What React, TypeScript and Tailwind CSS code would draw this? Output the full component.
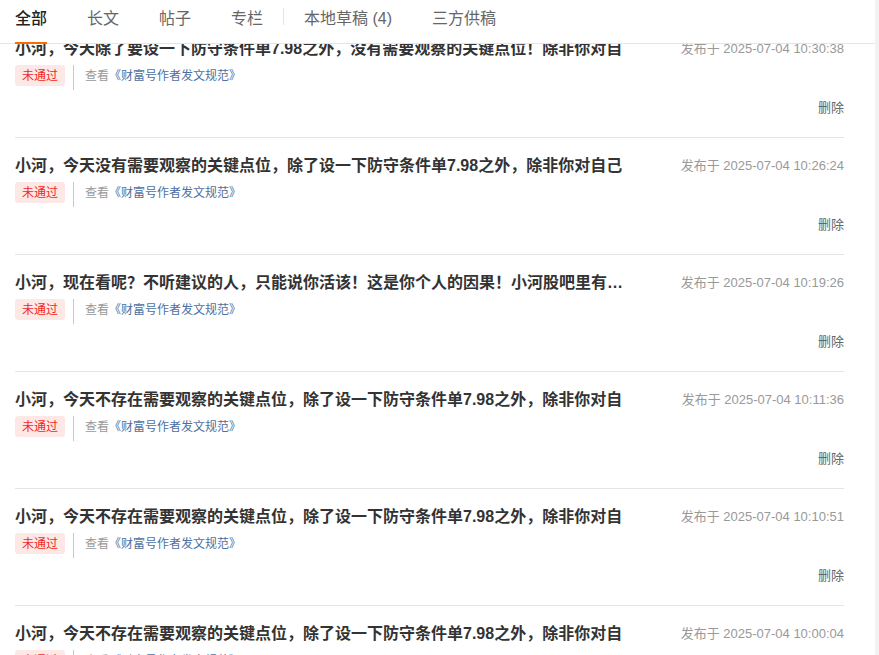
import React from "react";

const tabs = ["全部", "长文", "帖子", "专栏"];
const tabsRight = ["本地草稿 (4)", "三方供稿"];

interface postItem {
  title: string;
  date: string;
}

const posts: postItem[] = [
  {
    title: "小河，今天除了要设一下防守条件单7.98之外，没有需要观察的关键点位！除非你对自",
    date: "2025-07-04 10:30:38",
  },
  {
    title: "小河，今天没有需要观察的关键点位，除了设一下防守条件单7.98之外，除非你对自己",
    date: "2025-07-04 10:26:24",
  },
  {
    title: "小河，现在看呢？不听建议的人，只能说你活该！这是你个人的因果！小河股吧里有…",
    date: "2025-07-04 10:19:26",
  },
  {
    title: "小河，今天不存在需要观察的关键点位，除了设一下防守条件单7.98之外，除非你对自",
    date: "2025-07-04 10:11:36",
  },
  {
    title: "小河，今天不存在需要观察的关键点位，除了设一下防守条件单7.98之外，除非你对自",
    date: "2025-07-04 10:10:51",
  },
  {
    title: "小河，今天不存在需要观察的关键点位，除了设一下防守条件单7.98之外，除非你对自",
    date: "2025-07-04 10:00:04",
  },
];

const PostRow = ({ title, date }: postItem) => {
  return (
    <div className="w-[829px] border-b border-[#e5e5e5] pt-[16px] pb-[19px]">
      <div className="flex h-[24px] items-center justify-between">
        <h3 className="w-[612px] overflow-hidden whitespace-nowrap text-[16px] leading-[24px] font-bold text-[#333]">
          {title}
        </h3>
        <span className="text-[13px] text-[#999]">发布于 {date}</span>
      </div>
      <div className="mt-[4px] flex h-[25px] items-start">
        <span className="flex h-[21px] w-[50px] items-center justify-center rounded-[3px] bg-[#fde8e6] text-[12px] text-[#f2261f]">
          未通过
        </span>
        <div className="ml-[8px] h-[25px] w-px bg-[#c8c8c8]"></div>
        <span className="ml-[11px] flex h-[21px] items-center text-[12px] text-[#999]">
          查看
          <a className="text-[#4d6f9f]">《财富号作者发文规范》</a>
        </span>
      </div>
      <div className="mt-[8px] flex h-[20px] items-center justify-end">
        <span className="text-[13px] text-[#666]">删除</span>
      </div>
    </div>
  );
};

export default function App() {
  return (
    <div
      className="flex h-[655px] w-full overflow-hidden bg-[#f2f2f2]"
      style={{ fontFamily: '"Liberation Sans", "Noto Sans CJK SC", sans-serif' }}
    >
      <main className="relative h-full w-[875px] bg-white">
        <nav className="absolute top-0 right-0 left-0 z-10 flex h-[44px] items-start border-b border-[#e5e5e5] bg-white pl-[15px]">
          {tabs.map((t, i) => (
            <div
              key={t}
              className={`relative h-full pt-[8px] text-[16px] leading-[22px] ${
                i === 0 ? "font-medium text-[#222]" : "ml-[40px] text-[#666]"
              }`}
            >
              {t}
              {i === 0 && (
                <div className="absolute right-0 -bottom-px left-0 h-[2px] bg-[#ff6a00]"></div>
              )}
            </div>
          ))}
          <div className="mx-[20px] mt-[8px] h-[17px] w-px bg-[#e5e5e5]"></div>
          {tabsRight.map((t, i) => (
            <div
              key={t}
              className={`h-full pt-[8px] text-[16px] leading-[22px] text-[#666] ${
                i === 0 ? "" : "ml-[40px]"
              }`}
            >
              {t}
            </div>
          ))}
        </nav>
        <section className="pt-[21px] pl-[15px]">
          {posts.map((p, i) => (
            <PostRow key={i} title={p.title} date={p.date} />
          ))}
        </section>
      </main>
    </div>
  );
}
